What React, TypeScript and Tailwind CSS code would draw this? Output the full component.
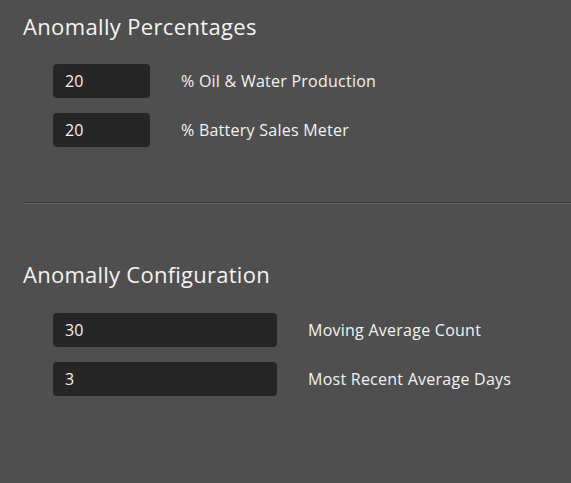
import React from "react";

function Row({ value, label, inputW }: { value: string; label: string; inputW: string }) {
  return (
    <div className="flex items-center">
      <div className={`${inputW} h-[34px] ml-[30px] rounded-[4px] bg-[#262626] flex items-center pl-[12px] text-[16px] text-[#f2f2f2]`}>
        {value}
      </div>
      <div className="ml-[31px] text-[16px] tracking-[0.25px] text-[#f2f2f2]">{label}</div>
    </div>
  );
}

export default function App() {
  return (
    <div
      className="w-full min-h-screen bg-[#4f4f4f] text-white"
      style={{ fontFamily: "'Open Sans', Lato, sans-serif" }}
    >
      <div className="pt-[12px] pl-[23px]">
        <h2 className="text-[22px] leading-[28px] tracking-[0.35px] text-[#f4f4f4]">Anomally Percentages</h2>
        <div className="mt-[24px] flex flex-col gap-[15px]">
          <Row value="20" label="% Oil & Water Production" inputW="w-[97px]" />
          <Row value="20" label="% Battery Sales Meter" inputW="w-[97px]" />
        </div>
      </div>
      <div className="mt-[55px] ml-[23px] border-t border-t-[#3a3a3a] border-b border-b-[#666666]" />
      <div className="pt-[56px] pl-[23px]">
        <h2 className="text-[22px] leading-[28px] tracking-[0.25px] text-[#f4f4f4]">Anomally Configuration</h2>
        <div className="mt-[25px] flex flex-col gap-[15px]">
          <Row value="30" label="Moving Average Count" inputW="w-[224px]" />
          <Row value="3" label="Most Recent Average Days" inputW="w-[224px]" />
        </div>
      </div>
    </div>
  );
}
